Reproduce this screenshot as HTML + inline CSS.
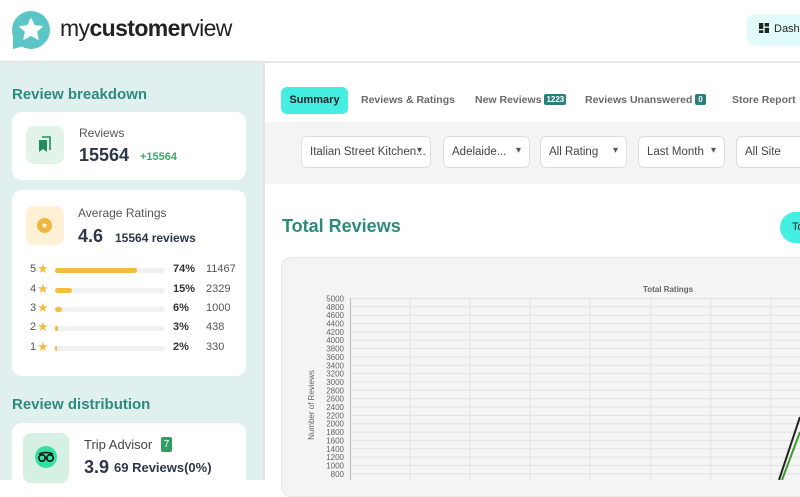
<!DOCTYPE html>
<html><head><meta charset="utf-8"><style>
*{margin:0;padding:0;box-sizing:border-box}
body{width:800px;height:480px;overflow:hidden;font-family:"Liberation Sans",sans-serif;background:#fff;position:relative;color:#333}
.a{position:absolute;white-space:nowrap}
.card{position:absolute;background:#fff;border-radius:10px}
.h{color:#2d8b7e;font-weight:bold}
.tab{position:absolute;top:94px;font-size:10.5px;color:#6a6a6a;font-weight:bold}
.badge{display:inline-block;background:#2a7f7a;color:#fff;font-size:8px;padding:1px 2px;border-radius:2px;vertical-align:1px}
.f{position:absolute;top:136px;height:32px;background:#fff;border:1px solid #ddd;border-radius:6px;font-size:11.5px;color:#444;padding:9px 0 0 8px}
.f:after{content:"▾";position:absolute;right:8px;top:8px;font-size:10px;color:#555}
.row{position:absolute;left:30px;font-size:11px;color:#555;height:14px;width:220px}
.row s{text-decoration:none;color:#f4bb42;font-size:13px;position:absolute;left:7px;top:-2px}
.bar{position:absolute;left:25px;top:5px;width:110px;height:5px;background:#f1f1f1;border-radius:3px}
.bar i{display:block;height:5px;background:#f4bb42;border-radius:3px}
</style></head><body>
<!-- header -->
<svg class="a" style="left:10px;top:10px" width="42" height="42" viewBox="0 0 42 42">
<circle cx="21" cy="20" r="19" fill="#5cc5c5"/><path d="M3 22 L3 39 L14 36 Z" fill="#5cc5c5"/>
<path d="M21 9 L24.3 16 L32 16.6 L26.2 21.5 L28 29 L21 25 L14 29 L15.8 21.5 L10 16.6 L17.7 16 Z" fill="#fff" stroke="#fff" stroke-width="1.5" stroke-linejoin="round"/></svg>
<div class="a" style="left:60px;top:15px;font-size:23px;color:#222;letter-spacing:-0.6px">my<b>customer</b>view</div>
<div class="a" style="left:747px;top:14px;width:60px;height:32px;background:#e0fbf9;border-radius:8px;font-size:11px;color:#222;padding:9px 0 0 12px"><svg width="10" height="10" viewBox="0 0 10 10" style="vertical-align:-1px;margin-right:5px"><rect x="0" y="0" width="4.3" height="6" fill="#222"/><rect x="5.7" y="0" width="4.3" height="3.5" fill="#222"/><rect x="0" y="7.2" width="4.3" height="2.8" fill="#222"/><rect x="5.7" y="4.8" width="4.3" height="5.2" fill="#222"/></svg>Dash</div>
<div class="a" style="left:0;top:61px;width:800px;height:2px;background:#e6e6e6"></div>
<!-- sidebar -->
<div class="a" style="left:0;top:63px;width:263px;height:417px;background:#e0f0ef"></div>
<div class="a" style="left:263px;top:63px;width:2px;height:417px;background:#e3e3e3"></div>
<div class="a h" style="left:12px;top:86px;font-size:15px">Review breakdown</div>
<div class="card" style="left:12px;top:112px;width:234px;height:68px"></div>
<div class="a" style="left:26px;top:126px;width:38px;height:38px;background:#e2f3ea;border-radius:8px"></div>
<svg class="a" style="left:37px;top:136px" width="16" height="18" viewBox="0 0 16 18"><path d="M5 1 H13 V14" fill="none" stroke="#1f8f5a" stroke-width="1.6"/><path d="M2 4 H10 V16 L6 13 L2 16 Z" fill="#1f8f5a"/></svg>
<div class="a" style="left:79px;top:126px;font-size:12px;color:#555">Reviews</div>
<div class="a" style="left:79px;top:145px;font-size:18px;font-weight:bold;color:#2d3748">15564</div>
<div class="a" style="left:140px;top:151px;font-size:11px;font-weight:bold;color:#3aa76d">+15564</div>
<div class="card" style="left:12px;top:190px;width:234px;height:186px"></div>
<div class="a" style="left:26px;top:206px;width:38px;height:39px;background:#fdf0d5;border-radius:8px"></div>
<div class="a" style="left:37px;top:218px;width:15px;height:15px;background:#f0b73d;border-radius:50%;color:#fff;font-size:8px;text-align:center;line-height:15px">★</div>
<div class="a" style="left:78px;top:206px;font-size:12px;color:#555">Average Ratings</div>
<div class="a" style="left:78px;top:226px;font-size:18px;font-weight:bold;color:#2d3748">4.6</div>
<div class="a" style="left:115px;top:231px;font-size:12px;font-weight:bold;color:#2d3748">15564 reviews</div>
<div class="row" style="top:263px">5<s>★</s><div class="bar"><i style="width:82px"></i></div><b class="a" style="left:143px;color:#333">74%</b><span class="a" style="left:176px">11467</span></div>
<div class="row" style="top:283px">4<s>★</s><div class="bar"><i style="width:17px"></i></div><b class="a" style="left:143px;color:#333">15%</b><span class="a" style="left:176px">2329</span></div>
<div class="row" style="top:302px">3<s>★</s><div class="bar"><i style="width:7px"></i></div><b class="a" style="left:143px;color:#333">6%</b><span class="a" style="left:176px">1000</span></div>
<div class="row" style="top:321px">2<s>★</s><div class="bar"><i style="width:3px"></i></div><b class="a" style="left:143px;color:#333">3%</b><span class="a" style="left:176px">438</span></div>
<div class="row" style="top:341px">1<s>★</s><div class="bar"><i style="width:2px"></i></div><b class="a" style="left:143px;color:#333">2%</b><span class="a" style="left:176px">330</span></div>
<div class="a h" style="left:12px;top:396px;font-size:15px">Review distribution</div>
<div class="card" style="left:12px;top:423px;width:234px;height:70px"></div>
<div class="a" style="left:23px;top:433px;width:46px;height:50px;background:#d6f0e3;border-radius:8px"></div>
<svg class="a" style="left:34px;top:445px" width="24" height="24" viewBox="0 0 24 24"><circle cx="12" cy="12" r="11" fill="#34e0a1"/><circle cx="8" cy="13" r="3.2" fill="none" stroke="#111" stroke-width="1.6"/><circle cx="16" cy="13" r="3.2" fill="none" stroke="#111" stroke-width="1.6"/><path d="M5 9 Q12 6 19 9" fill="none" stroke="#111" stroke-width="1.6"/></svg>
<div class="a" style="left:84px;top:437px;font-size:13px;color:#444">Trip Advisor</div>
<div class="a" style="left:161px;top:437px;width:11px;height:15px;background:#2e9e63;color:#fff;font-size:10px;text-align:center;line-height:15px;border-radius:2px">7</div>
<div class="a" style="left:84px;top:457px;font-size:18px;font-weight:bold;color:#2d3748">3.9</div>
<div class="a" style="left:114px;top:460px;font-size:13px;font-weight:bold;color:#2d3748">69 Reviews(0%)</div>
<!-- tabs -->
<div class="a" style="left:281px;top:87px;width:67px;height:27px;background:#44eee0;border-radius:6px;font-size:11px;font-weight:bold;color:#222;text-align:center;line-height:27px">Summary</div>
<div class="tab" style="left:361px">Reviews &amp; Ratings</div>
<div class="tab" style="left:475px">New Reviews <span class="badge">1223</span></div>
<div class="tab" style="left:585px">Reviews Unanswered <span class="badge" style="padding:1px 3px">0</span></div>
<div class="tab" style="left:732px">Store Report</div>
<div class="a" style="left:265px;top:122px;width:535px;height:62px;background:#f4f4f4"></div>
<div class="f" style="left:301px;width:130px">Italian Street Kitchen...</div>
<div class="f" style="left:443px;width:87px">Adelaide...</div>
<div class="f" style="left:540px;width:87px">All Rating</div>
<div class="f" style="left:638px;width:87px">Last Month</div>
<div class="f" style="left:736px;width:80px">All Site</div>
<div class="a h" style="left:282px;top:216px;font-size:18px">Total Reviews</div>
<div class="a" style="left:780px;top:212px;width:40px;height:31px;background:#44eee0;border-radius:16px;font-size:11px;color:#222;padding:9px 0 0 12px">To</div>
<!-- chart -->
<div class="a" style="left:281px;top:257px;width:540px;height:240px;background:#f4f4f4;border:1px solid #e6e6e6;border-radius:10px"></div>
<svg class="a" style="left:281px;top:257px" width="519" height="223">
<g stroke="#e2e2e2" stroke-width="1">
<line x1="69" y1="41.5" x2="519" y2="41.5"/><line x1="69" y1="49.8" x2="519" y2="49.8"/><line x1="69" y1="58.2" x2="519" y2="58.2"/><line x1="69" y1="66.5" x2="519" y2="66.5"/><line x1="69" y1="74.9" x2="519" y2="74.9"/><line x1="69" y1="83.2" x2="519" y2="83.2"/><line x1="69" y1="91.6" x2="519" y2="91.6"/><line x1="69" y1="99.9" x2="519" y2="99.9"/><line x1="69" y1="108.3" x2="519" y2="108.3"/><line x1="69" y1="116.6" x2="519" y2="116.6"/><line x1="69" y1="125" x2="519" y2="125"/><line x1="69" y1="133.3" x2="519" y2="133.3"/><line x1="69" y1="141.7" x2="519" y2="141.7"/><line x1="69" y1="150" x2="519" y2="150"/><line x1="69" y1="158.4" x2="519" y2="158.4"/><line x1="69" y1="166.7" x2="519" y2="166.7"/><line x1="69" y1="175.1" x2="519" y2="175.1"/><line x1="69" y1="183.4" x2="519" y2="183.4"/><line x1="69" y1="191.8" x2="519" y2="191.8"/><line x1="69" y1="200.1" x2="519" y2="200.1"/><line x1="69" y1="208.5" x2="519" y2="208.5"/><line x1="69" y1="216.8" x2="519" y2="216.8"/>
<line x1="129" y1="41" x2="129" y2="223"/><line x1="189" y1="41" x2="189" y2="223"/><line x1="249" y1="41" x2="249" y2="223"/><line x1="309" y1="41" x2="309" y2="223"/><line x1="370" y1="41" x2="370" y2="223"/><line x1="430" y1="41" x2="430" y2="223"/><line x1="490" y1="41" x2="490" y2="223"/>
</g>
<line x1="69.5" y1="41" x2="69.5" y2="223" stroke="#bbb"/>
<g font-size="8" fill="#666" text-anchor="end" font-family="Liberation Sans">
<text x="63" y="44.5">5000</text><text x="63" y="52.8">4800</text><text x="63" y="61.2">4600</text><text x="63" y="69.5">4400</text><text x="63" y="77.9">4200</text><text x="63" y="86.2">4000</text><text x="63" y="94.6">3800</text><text x="63" y="102.9">3600</text><text x="63" y="111.3">3400</text><text x="63" y="119.6">3200</text><text x="63" y="128">3000</text><text x="63" y="136.3">2800</text><text x="63" y="144.7">2600</text><text x="63" y="153">2400</text><text x="63" y="161.4">2200</text><text x="63" y="169.7">2000</text><text x="63" y="178.1">1800</text><text x="63" y="186.4">1600</text><text x="63" y="194.8">1400</text><text x="63" y="203.1">1200</text><text x="63" y="211.5">1000</text><text x="63" y="219.8">800</text>
</g>
<text x="387" y="35" font-size="8" font-weight="bold" fill="#666" text-anchor="middle" font-family="Liberation Sans">Total Ratings</text>
<text transform="translate(33,148) rotate(-90)" font-size="8" fill="#666" text-anchor="middle" font-family="Liberation Sans">Number of Reviews</text>
<line x1="498" y1="223" x2="519" y2="160" stroke="#222" stroke-width="2"/>
<line x1="501" y1="223" x2="519" y2="175" stroke="#3a9a2a" stroke-width="2"/>
</svg>
</body></html>
